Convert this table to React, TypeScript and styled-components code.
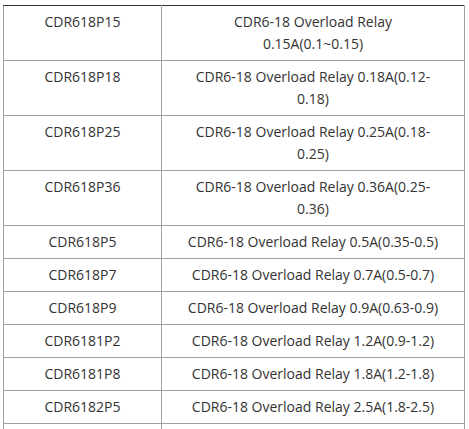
import styled, { createGlobalStyle } from 'styled-components';

const GlobalStyle = createGlobalStyle`
  body {
    margin: 0;
    background: #ffffff;
    font-family: "Open Sans", "Liberation Sans", sans-serif;
  }
`;

const Wrap = styled.div`
  padding: 5px 0 0 3px;
`;

const Table = styled.table`
  width: 461px;
  border-collapse: collapse;
  table-layout: fixed;
`;

const Col = styled.col<{ $w: number }>`
  width: ${(p) => p.$w}px;
`;

const Cell = styled.td<{ $wide?: boolean }>`
  border: 1px solid #a0a0a0;
  padding: 5px ${(p) => (p.$wide ? '22px' : '8px')};
  font-size: 14px;
  line-height: 22px;
  height: 22px;
  color: #333;
  text-align: center;
  vertical-align: top;
`;

const FirstRow = styled.tr`
  td {
    border-top: 1px solid #333;
  }
`;

const rows: [string, string][] = [
  ['CDR618P15', 'CDR6-18 Overload Relay 0.15A(0.1~0.15)'],
  ['CDR618P18', 'CDR6-18 Overload Relay 0.18A(0.12-0.18)'],
  ['CDR618P25', 'CDR6-18 Overload Relay 0.25A(0.18-0.25)'],
  ['CDR618P36', 'CDR6-18 Overload Relay 0.36A(0.25-0.36)'],
  ['CDR618P5', 'CDR6-18 Overload Relay 0.5A(0.35-0.5)'],
  ['CDR618P7', 'CDR6-18 Overload Relay 0.7A(0.5-0.7)'],
  ['CDR618P9', 'CDR6-18 Overload Relay 0.9A(0.63-0.9)'],
  ['CDR6181P2', 'CDR6-18 Overload Relay 1.2A(0.9-1.2)'],
  ['CDR6181P8', 'CDR6-18 Overload Relay 1.8A(1.2-1.8)'],
  ['CDR6182P5', 'CDR6-18 Overload Relay 2.5A(1.8-2.5)'],
  ['', ''],
];

export default function App() {
  return (
    <Wrap>
      <GlobalStyle />
      <Table>
        <colgroup>
          <Col $w={158} />
          <Col $w={303} />
        </colgroup>
        <tbody>
          {rows.map(([code, name], i) => {
            const Row = i === 0 ? FirstRow : 'tr';
            return (
              <Row key={i}>
                <Cell>{code}</Cell>
                <Cell $wide>{name}</Cell>
              </Row>
            );
          })}
        </tbody>
      </Table>
    </Wrap>
  );
}
